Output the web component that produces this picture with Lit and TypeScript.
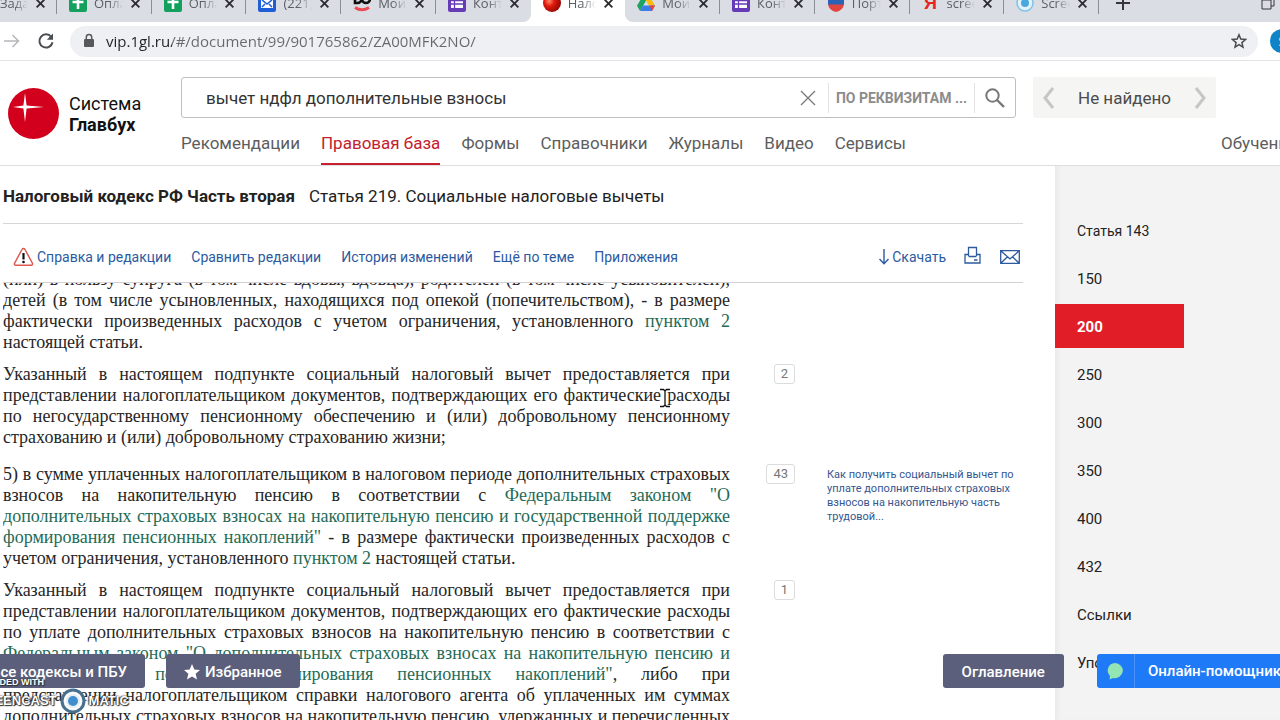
import { LitElement, html, css, svg, nothing } from "lit";
import { customElement } from "lit/decorators.js";
import { classMap } from "lit/directives/class-map.js";

const icons: Record<string, unknown> = {
  sheet: svg`<rect width="18" height="18" rx="2" fill="#12a05c"/><path d="M9 3v12M3.500 8h11" stroke="#fff" stroke-width="2.600"/>`,
  mail: svg`<rect width="18" height="18" rx="2" fill="#1f5fd6"/><rect x="3" y="4" width="12" height="10" fill="#fff"/><path d="M4 6l5 4 5-4M4 13l3-3M14 13l-3-3" fill="none" stroke="#1f5fd6" stroke-width="1.500"/>`,
  doc: svg`<path d="M2 1h2.500a3.500 3.500 0 010 8H2zM13 1a4 4 0 110 8 4 4 0 010-8z" fill="none" stroke="#111" stroke-width="2.600"/><path d="M2 13.500q7 4.500 14 0" fill="none" stroke="#ec4a55" stroke-width="3"/>`,
  form: svg`<rect width="18" height="18" rx="2" fill="#673ab7"/><rect x="3" y="3" width="12" height="11" fill="#fff"/><path d="M3 6.500h12M3 10h12M6.500 3v11" stroke="#673ab7" stroke-width="1.300"/>`,
  ball: svg`<defs><radialGradient id="rb" cx=".35" cy=".4" r=".7"><stop offset="0" stop-color="#ff8a6a"/><stop offset=".4" stop-color="#e0190d"/><stop offset="1" stop-color="#8c0500"/></radialGradient></defs><circle cx="9" cy="9" r="9" fill="url(#rb)"/>`,
  drive: svg`<path d="M6 1.500h6l6 10h-6z" fill="#fbbc04"/><path d="M6 1.500l3 5.200L3 17l-3-5.300z" fill="#1da362"/><path d="M6 11.500h12L15 17H3z" fill="#3b7de9"/><path d="M12.500 11.500H18L15 17z" fill="#ea4335"/>`,
  flag: svg`<path d="M1 0h16v6H1z" fill="#e8eaf0"/><path d="M1 4h16v7H1z" fill="#2b62b5"/><path d="M1 10.500h16q-1 6-8 7.500-7-1.500-8-7.500z" fill="#e2453f"/>`,
  rec: svg`<circle cx="9" cy="9" r="8" fill="#e4f1f9" stroke="#7cc4e6" stroke-width="1.500"/><circle cx="9" cy="9" r="4" fill="#4aa8dc"/>`,
};

const tabs = [
  { icon: "sheet", title: "Оплата" },
  { icon: "sheet", title: "Оплата" },
  { icon: "mail", title: "(221) Входящие" },
  { icon: "doc", title: "Мои курсы" },
  { icon: "form", title: "Контроль" },
  { icon: "ball", title: "Налоговый", active: true },
  { icon: "drive", title: "Мой диск" },
  { icon: "form", title: "Контроль" },
  { icon: "flag", title: "Портал" },
  { icon: "ya", title: "screencast" },
  { icon: "rec", title: "Screencast" },
];

const cross = html`<svg class="x" viewBox="0 0 10 10"><path d="M1.500 1.500l7 7M8.500 1.500l-7 7" stroke="#2b2d31" stroke-width="1.700"/></svg>`;

@customElement("browser-chrome")
class BrowserChrome extends LitElement {
  static styles = css`
    :host { display: flow-root; overflow: hidden; font-family: "Open Sans", sans-serif; }
    .strip { display: flex; height: 38px; margin-top: -16px; background: #fff; }
    .tabs { flex: 1; display: grid; grid-template-columns: repeat(11, 1fr); }
    .tab { display: flex; align-items: center; padding: 0 11px 0 12px; gap: 7px; min-width: 0; position: relative; }
    .tab, .end { background: #dadde4; }
    .tab::after { content: ""; position: absolute; right: 0; top: 6px; width: 1px; height: 24px; background: #8b8e94; }
    .tab.active { background: #fff; }
    .tab.active::after, .tab.before::after { display: none; }
    .tab.before { border-bottom-right-radius: 8px; }
    .tab.after { border-bottom-left-radius: 8px; }
    .tab.first { width: 57px; box-sizing: border-box; padding: 0 11px 0 0; }
    .title { flex: 1; min-width: 0; overflow: hidden; white-space: nowrap; font-size: 13px; line-height: 18px; color: #5b5e63; -webkit-mask-image: linear-gradient(90deg, #000 50%, transparent); mask-image: linear-gradient(90deg, #000 50%, transparent); }
    .fav { width: 18px; height: 18px; flex: none; }
    .ya { width: 18px; flex: none; text-align: center; color: #e52620; font: bold 18px/18px "Liberation Sans", sans-serif; }
    .x { width: 11px; height: 11px; flex: none; }
    .end { width: 181px; box-sizing: border-box; display: flex; align-items: center; justify-content: space-between; padding: 0 5px 0 17px; }
    .end svg { width: 14px; height: 14px; }
    .bar { height: 39px; box-sizing: border-box; background: #fff; border-bottom: 1px solid #e3e3e5; display: flex; align-items: center; }
    .nav { display: flex; align-items: center; gap: 14px; width: 70px; padding-left: 2px; box-sizing: border-box; }
    .nav svg { width: 20px; height: 20px; }
    button { border: 0; background: none; padding: 0; display: flex; font: inherit; }
    .pill { flex: 1; height: 31px; border-radius: 16px; background: #eff0f4; display: flex; align-items: center; padding: 0 11px 0 12px; gap: 10px; }
    .url { flex: 1; min-width: 0; border: 0; outline: 0; padding: 0; font: 15px/20px "Open Sans", sans-serif; color: transparent; background: linear-gradient(90deg, #202124 66px, #65686d 66px); -webkit-background-clip: text; background-clip: text; }
    .avatar { width: 22px; flex: none; overflow: hidden; display: flex; padding-left: 12px; box-sizing: border-box; }
    .avatar span { flex: none; width: 24px; height: 24px; border-radius: 12px; background: #0e84c8; color: #fff; font-size: 13px; line-height: 24px; text-align: center; }
  `;
  render() {
    return html`
      <div class="strip">
        <div class="tab first"><span class="title">Задачи</span>${cross}</div>
        <div class="tabs">
          ${tabs.map((t, i) => html`<div class=${classMap({ tab: true, active: !!t.active, before: i === 4, after: i === 6 })}>
            ${t.icon === "ya" ? html`<span class="ya">Я</span>` : html`<svg class="fav" viewBox="0 0 18 18">${icons[t.icon]}</svg>`}
            <span class="title">${t.title}</span>${cross}
          </div>`)}
        </div>
        <div class="end">
          <svg viewBox="0 0 14 14"><path d="M7 0v14M0 7h14" stroke="#35373b" stroke-width="2"/></svg>
          <svg viewBox="0 0 14 14"><path d="M1 4h9v9H1zM4 4V1h9v9h-3" fill="none" stroke="#35373b"/></svg>
        </div>
      </div>
      <div class="bar">
        <div class="nav">
          <button aria-label="Вперёд"><svg viewBox="0 0 20 20"><path d="M2 10h14M10.500 4l6 6-6 6" fill="none" stroke="#b5b7bb" stroke-width="1.500"/></svg></button>
          <button aria-label="Обновить"><svg viewBox="0 0 20 20"><path d="M15.300 6A6.600 6.600 0 1016.500 11.200" fill="none" stroke="#4a4d51" stroke-width="2"/><path d="M17 2.500v6.200h-6.200z" fill="#4a4d51"/></svg></button>
        </div>
        <div class="pill">
          <svg width="14" height="16" viewBox="0 0 14 16"><rect x="2" y="6" width="10" height="8" rx="1" fill="#55585d"/><path d="M4.300 6V4.300a2.700 2.700 0 015.400 0V6" fill="none" stroke="#55585d" stroke-width="1.500"/></svg>
          <input class="url" aria-label="Адрес" .value=${"vip.1gl.ru/#/document/99/901765862/ZA00MFK2NO/"} />
          <button aria-label="Добавить в закладки"><svg width="16" height="16" viewBox="0 0 16 16"><path d="M8 1.800l1.800 4.300 4.700.4-3.600 3.100 1.100 4.600L8 11.700l-4 2.500 1.100-4.600L1.500 6.500l4.700-.4z" fill="none" stroke="#484b50" stroke-width="1.500"/></svg></button>
        </div>
        <div class="avatar"><span>S</span></div>
      </div>`;
  }
}

@customElement("site-header")
class SiteHeader extends LitElement {
  static styles = css`
    :host { display: block; background: #fff; border-bottom: 1px solid #dedede; font-family: "Roboto", sans-serif; }
    .head { display: flex; height: 104px; overflow: hidden; }
    .logo { width: 181px; flex: none; box-sizing: border-box; padding: 27px 0 0 8px; display: flex; gap: 10px; color: #111; text-decoration: none; font-size: 18px; line-height: 21px; }
    .logo svg { width: 51px; height: 51px; flex: none; }
    .logo span { display: block; padding-top: 5px; }
    .logo b { display: block; }
    .right { flex: 1; min-width: 0; display: flex; flex-direction: column; justify-content: space-between; padding-top: 16px; }
    .row { display: flex; gap: 17px; padding-right: 64px; }
    .search { flex: 1; min-width: 0; height: 41px; box-sizing: border-box; border: 1px solid #bfbfbf; border-radius: 3px; display: flex; align-items: center; }
    .search input { flex: 1; min-width: 0; border: 0; outline: 0; padding: 0 0 0 24px; font: 17px "Roboto", sans-serif; color: #333; background: none; }
    button { border: 0; background: none; padding: 0; font: inherit; display: flex; align-items: center; justify-content: center; }
    .clear { width: 40px; height: 30px; }
    .req { width: 147px; height: 30px; border-left: 1px solid #e2e2e2; border-right: 1px solid #e2e2e2; color: #8c8c8c; font-size: 14px; font-weight: 700; box-sizing: border-box; white-space: nowrap; }
    .go { width: 40px; height: 30px; }
    .found { width: 183px; height: 41px; background: #f5f5f4; display: flex; align-items: center; justify-content: space-between; padding: 0 9px; box-sizing: border-box; font-size: 17px; color: #4c4c4c; border-radius: 2px; }
    nav { display: flex; gap: 21px; font-size: 17px; line-height: 20px; }
    nav a { color: #5d5d5d; text-decoration: none; white-space: nowrap; padding: 0 0 10px; border-bottom: 2px solid transparent; }
    nav a.on { color: #c4202e; border-color: #c4202e; }
    nav a.learn { margin-left: auto; width: 59px; }
  `;
  render() {
    const items = ["Рекомендации", "Правовая база", "Формы", "Справочники", "Журналы", "Видео", "Сервисы"];
    return html`<div class="head">
      <a class="logo" href="#"><svg viewBox="0 0 51 51"><circle cx="25.500" cy="25.500" r="25.500" fill="#d2001c"/><path d="M17 5l1.600 12.400L36 19l-17.400 1.600L17 34l-1.600-13.400L5 19l10.400-1.600z" fill="#fff"/></svg><span>Система<b>Главбух</b></span></a>
      <div class="right">
        <div class="row">
          <form class="search" @submit=${(e: Event) => e.preventDefault()}>
            <input aria-label="Поиск" .value=${"вычет ндфл дополнительные взносы"} />
            <button type="button" class="clear" aria-label="Очистить"><svg width="16" height="16" viewBox="0 0 16 16"><path d="M1 1l14 14M15 1L1 15" stroke="#777" stroke-width="1.300"/></svg></button>
            <button type="button" class="req">ПО РЕКВИЗИТАМ ...</button>
            <button class="go" aria-label="Найти"><svg width="20" height="20" viewBox="0 0 20 20"><circle cx="7.500" cy="7.500" r="6.200" fill="none" stroke="#777" stroke-width="2"/><path d="M12 12l7 7" stroke="#777" stroke-width="2.400"/></svg></button>
          </form>
          <div class="found">
            <button aria-label="Назад"><svg width="14" height="24" viewBox="0 0 14 24"><path d="M11 2L3 12l8 10" fill="none" stroke="#c6c6c6" stroke-width="3"/></svg></button>
            <span>Не найдено</span>
            <button aria-label="Далее"><svg width="14" height="24" viewBox="0 0 14 24"><path d="M3 2l8 10-8 10" fill="none" stroke="#c6c6c6" stroke-width="3"/></svg></button>
          </div>
        </div>
        <nav>${items.map((t, i) => html`<a href="#" class=${i === 1 ? "on" : ""}>${t}</a>`)}<a href="#" class="learn">Обучение</a></nav>
      </div>
    </div>`;
  }
}

type Para = { lines: unknown[]; count?: string; note?: string; wide?: boolean };
const a = (t: string) => html`<a href="#">${t}</a>`;
const paras: Para[] = [
  { lines: [
    "(или) в пользу супруга (в том числе вдовы, вдовца), родителей (в том числе усыновителей),",
    "детей (в том числе усыновленных, находящихся под опекой (попечительством), - в размере",
    html`фактически произведенных расходов с учетом ограничения, установленного ${a("пунктом 2")}`,
    "настоящей статьи.",
  ] },
  { count: "2", lines: [
    "Указанный в настоящем подпункте социальный налоговый вычет предоставляется при",
    "представлении налогоплательщиком документов, подтверждающих его фактические расходы",
    "по негосударственному пенсионному обеспечению и (или) добровольному пенсионному",
    "страхованию и (или) добровольному страхованию жизни;",
  ] },
  { count: "43", wide: true, note: "Как получить социальный вычет по уплате дополнительных страховых взносов на накопительную часть трудовой...", lines: [
    "5) в сумме уплаченных налогоплательщиком в налоговом периоде дополнительных страховых",
    html`взносов на накопительную пенсию в соответствии с ${a('Федеральным законом "О')}`,
    a("дополнительных страховых взносах на накопительную пенсию и государственной поддержке"),
    html`${a('формирования пенсионных накоплений"')} - в размере фактически произведенных расходов с`,
    html`учетом ограничения, установленного ${a("пунктом 2")} настоящей статьи.`,
  ] },
  { count: "1", lines: [
    "Указанный в настоящем подпункте социальный налоговый вычет предоставляется при",
    "представлении налогоплательщиком документов, подтверждающих его фактические расходы",
    "по уплате дополнительных страховых взносов на накопительную пенсию в соответствии с",
    a('Федеральным законом "О дополнительных страховых взносах на накопительную пенсию и'),
    html`${a('государственной поддержке формирования пенсионных накоплений"')}, либо при`,
    "представлении налогоплательщиком справки налогового агента об уплаченных им суммах",
    "дополнительных страховых взносов на накопительную пенсию, удержанных и перечисленных",
    "по поручению налогоплательщика.",
  ] },
];

@customElement("law-document")
class LawDocument extends LitElement {
  static styles = css`
    :host { display: flex; flex-direction: column; min-height: 0; font-family: "Roboto", sans-serif; padding: 0 32px 0 3px; overflow: hidden; }
    h1 { margin: 0; height: 55px; padding-top: 2px; flex: none; border-bottom: 1px solid #d6d6d6; display: flex; align-items: center; gap: 14px; font-size: 17px; font-weight: 400; color: #222; white-space: nowrap; }
    a { text-decoration: none; }
    .tools { height: 59px; flex: none; border-bottom: 1px solid #d4cfd4; display: flex; align-items: center; gap: 20px; padding: 8px 3px 0 10px; box-sizing: border-box; font-size: 14px; }
    .tools a { color: #2c5aa0; display: flex; align-items: center; white-space: nowrap; gap: 3px; }
    .tools svg { display: block; }
    .acts { margin-left: auto; display: flex; align-items: center; gap: 18px; }
    .body { flex: 1; min-height: 0; overflow: hidden; }
    .scroll { display: grid; gap: 11px; margin-top: -14px; }
    .para { display: grid; grid-template-columns: 727px 65px 1fr; align-items: start; }
    .wide { padding-top: 5px; }
    p { margin: 0; font: 18px/21px "Liberation Serif", serif; color: #262626; }
    .line { display: block; text-align: justify; text-align-last: justify; }
    .line:last-child { text-align-last: left; }
    p a { color: #1f6b56; }
    .count { justify-self: end; box-sizing: border-box; height: 20px; min-width: 20px; padding: 0 6px; border: 1px solid #dcdcdc; border-radius: 3px; font-size: 13px; line-height: 18px; text-align: center; color: #777; background: #fff; }
    .note { margin-left: 32px; font-size: 11px; line-height: 14px; color: #35568f; padding-top: 4px; }
  `;
  render() {
    return html`
      <h1><b>Налоговый кодекс РФ Часть вторая</b><span>Статья 219. Социальные налоговые вычеты</span></h1>
      <div class="tools">
        <a href="#"><svg width="21" height="20" viewBox="0 0 21 20"><path d="M10.500 1.500q1 0 1.500 1l7.300 13.500q.8 2-1.200 2.200H2.900Q.9 18 1.700 16L9 2.500q.5-1 1.500-1z" fill="#fff" stroke="#dc5a50" stroke-width="1.500"/><path d="M10.500 6v6.500" stroke="#111" stroke-width="2.200"/><circle cx="10.500" cy="15" r="1.300" fill="#111"/></svg>Справка и редакции</a>
        <a href="#">Сравнить редакции</a><a href="#">История изменений</a><a href="#">Ещё по теме</a><a href="#">Приложения</a>
        <div class="acts">
        <a href="#"><svg width="10" height="16" viewBox="0 0 10 16"><path d="M5 0v14.500M.5 10L5 14.800 9.500 10" fill="none" stroke="#2c5aa0" stroke-width="1.400"/></svg>Скачать</a>
        <a href="#" aria-label="Печать"><svg width="18" height="22" viewBox="0 0 18 22"><path d="M4.500 10V1.500h8V10M4.500 8.500H1V17h15V8.500h-3.500M4.500 10.500h8M10 14h3.500" fill="none" stroke="#2c5aa0" stroke-width="1.300"/></svg></a>
        <a href="#" aria-label="Отправить"><svg width="20" height="14" viewBox="0 0 20 14"><path d="M.7.700h18.600v12.600H.7zM1 1l9 8 9-8M1 13l6.500-6.200M19 13l-6.500-6.200" fill="none" stroke="#2c5aa0" stroke-width="1.300"/></svg></a>
        </div>
      </div>
      <div class="body"><div class="scroll">
        ${paras.map((p) => html`<div class=${classMap({ para: true, wide: !!p.wide })}>
          <p>${p.lines.map((l) => html`<span class="line">${l}</span>`)}</p>
          ${p.count ? html`<span class="count">${p.count}</span>` : nothing}
          ${p.note ? html`<a class="note" href="#">${p.note}</a>` : nothing}
        </div>`)}
      </div></div>`;
  }
}

@customElement("app-root")
class AppRoot extends LitElement {
  static styles = css`
    :host { display: flex; flex-direction: column; height: 100vh; overflow: hidden; position: relative; background: #fff; font-family: "Roboto", sans-serif; }
    main { flex: 1; min-height: 0; display: flex; }
    law-document { flex: 1; min-width: 0; }
    aside { width: 225px; flex: none; background: #f4f3f3; box-shadow: inset 5px 0 6px -4px #e4e4e4; padding-top: 42px; box-sizing: border-box; display: flex; flex-direction: column; gap: 4px; overflow: hidden; }
    aside a { flex: none; width: 129px; height: 44px; box-sizing: border-box; padding-left: 22px; line-height: 46px; font-size: 15px; color: #222; text-decoration: none; white-space: nowrap; }
    aside a:first-child { font-size: 14px; }
    aside a.on { background: #e11d28; color: #fff; font-weight: 700; }
    .float { position: absolute; bottom: 32px; display: flex; gap: 21px; }
    .left { left: -27px; }
    .rightside { right: -15px; gap: 33px; }
    button { height: 34px; border: 0; border-radius: 3px; background: #5c5f7b; color: #fff; font: 500 15px "Roboto", sans-serif; padding: 2px 18px 0; display: flex; align-items: center; gap: 5px; white-space: nowrap; }
    .toc { padding: 2px 19px 0; }
    .chat { background: #1f7af8; padding: 0 14px 0 0; gap: 13px; }
    .chat span { height: 34px; width: 37px; border-right: 1px solid #4b93fa; display: flex; align-items: center; justify-content: center; }
    .mark { position: absolute; left: -33px; bottom: 6px; color: #fff; font: bold 9px/11px "Liberation Sans", sans-serif; text-shadow: 0 0 2px #222, 1px 1px 1px #333, -1px 0 1px #555; }
    .brand { display: flex; align-items: center; font-size: 13px; line-height: 26px; height: 26px; gap: 3px; }
    .cursor { position: absolute; left: 659px; top: 388px; }
  `;
  render() {
    const toc = ["Статья 143", "150", "200", "250", "300", "350", "400", "432", "Ссылки", "Упоминания"];
    return html`
      <browser-chrome></browser-chrome>
      <site-header></site-header>
      <main>
        <law-document></law-document>
        <aside>${toc.map((t) => html`<a href="#" class=${t === "200" ? "on" : ""}>${t}</a>`)}</aside>
      </main>
      <div class="float left">
        <button>Все кодексы и ПБУ</button>
        <button><svg width="16" height="16" viewBox="0 0 16 16"><path d="M8 0l2.300 5.500 5.700.5-4.300 3.800L13 15.500l-5-3.100-5 3.100 1.300-5.700L0 6l5.700-.5z" fill="#fff"/></svg>Избранное</button>
      </div>
      <div class="float rightside">
        <button class="toc">Оглавление</button>
        <button class="chat"><span><svg width="18" height="18" viewBox="0 0 18 18"><path d="M9 1a8 7.600 0 11-2 15L3.500 17.500l.5-3.500A7.600 7.600 0 019 1z" fill="#93e5b4"/></svg></span>Онлайн-помощник</button>
      </div>
      <div class="mark">RECORDED WITH<div class="brand">SCREENCAST<svg width="26" height="26" viewBox="0 0 26 26"><circle cx="13" cy="13" r="11" fill="#e9eff3" stroke="#47708f" stroke-width="3"/><circle cx="13" cy="13" r="8" fill="none" stroke="#fff" stroke-width="1.500"/><circle cx="13" cy="13" r="5" fill="#3f8fd0"/></svg>MATIC</div></div>
      <svg class="cursor" width="12" height="20" viewBox="0 0 12 20"><path d="M1 1.500h3.500L6 3l1.500-1.500H11M6 3v14M1 18.500h3.500L6 17l1.500 1.500H11" fill="none" stroke="#111" stroke-width="1.300"/></svg>`;
  }
}
